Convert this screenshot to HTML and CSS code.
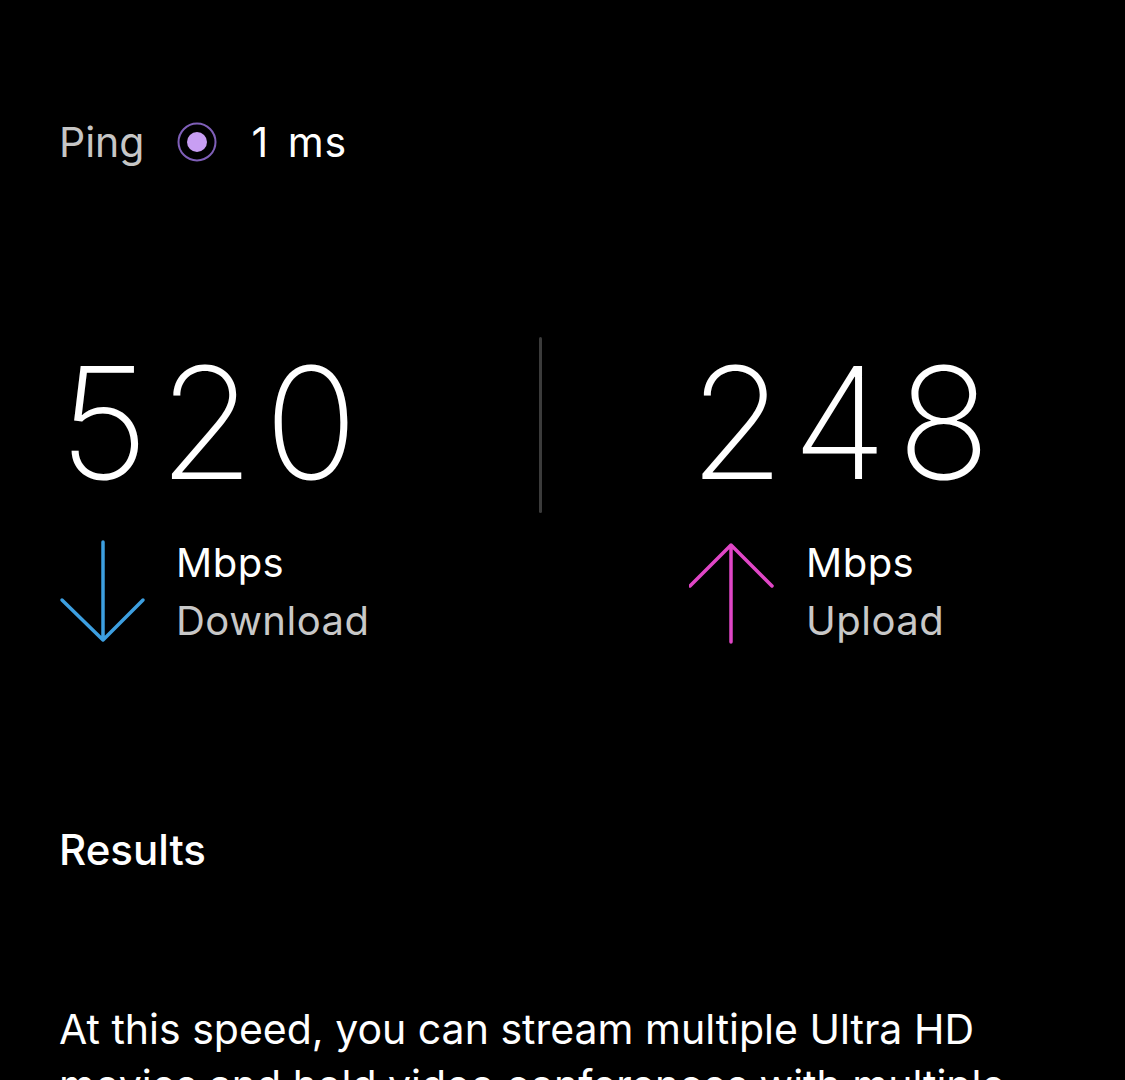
FILE: index.html
```html
<!DOCTYPE html>
<html lang="en">
<head>
    <meta charset="UTF-8">
    <meta name="viewport" content="width=device-width, initial-scale=1.0">
    <title>Speed Test Results</title>
    <link rel="stylesheet" href="styles.css">
</head>
<body>
    <div class="screen">
        <div class="ping">
            <span class="ping-label">Ping</span>
            <svg class="ping-dot" width="42" height="42" viewBox="0 0 42 42">
                <circle cx="21" cy="21" r="18.5" fill="none" stroke="#7f5fb8" stroke-width="2"/>
                <circle cx="21" cy="21" r="10" fill="#c89ef3"/>
            </svg>
            <span class="ping-value">1 ms</span>
        </div>

        <div class="speeds">
            <div class="speed">
                <div class="speed-value">520</div>
                <div class="speed-meta">
                    <svg class="arrow" width="90" height="104" viewBox="0 0 90 104">
                        <path d="M44 2 V100 M3 60 L44 100 L84 60" fill="none" stroke="#3d9fe0" stroke-width="3.5" stroke-linecap="round" stroke-linejoin="round"/>
                    </svg>
                    <div class="labels">
                        <span class="unit">Mbps</span>
                        <span class="kind">Download</span>
                    </div>
                </div>
            </div>

            <div class="divider"></div>

            <div class="speed speed-up">
                <div class="speed-value">248</div>
                <div class="speed-meta">
                    <svg class="arrow" width="90" height="104" viewBox="0 0 90 104">
                        <path d="M42 5 V102 M1 46 L42 5 L83 46" fill="none" stroke="#e046c6" stroke-width="3.5" stroke-linecap="round" stroke-linejoin="round"/>
                    </svg>
                    <div class="labels">
                        <span class="unit">Mbps</span>
                        <span class="kind">Upload</span>
                    </div>
                </div>
            </div>
        </div>

        <h2 class="results-title">Results</h2>

        <p class="results-text">At this speed, you can stream multiple Ultra HD movies and hold video conferences with multiple devices at the same time.</p>
    </div>
</body>
</html>
```

FILE: styles.css
```css
* {
    box-sizing: border-box;
    margin: 0;
    padding: 0;
}

html, body {
    background: #000;
}

body {
    font-family: Inter, "Noto Sans", sans-serif;
    color: #fff;
    overflow: hidden;
    height: 1080px;
}

.screen {
    padding: 118px 0 0 59px;
}

.ping {
    display: flex;
    align-items: center;
    height: 48px;
    font-size: 41px;
}

.ping-label {
    color: #c6c6c6;
}

.ping-dot {
    margin-left: 32px;
}

.ping-value {
    margin-left: 33px;
    letter-spacing: 1px;
    word-spacing: 6px;
}

.speeds {
    display: grid;
    grid-template-columns: 480px 3px 1fr;
    margin-top: 171px;
}

.divider {
    background: #3b3b3b;
    height: 176px;
    border-radius: 2px;
}

.speed-up {
    padding-left: 147px;
}

.speed-value {
    font-size: 155px;
    font-weight: 200;
    line-height: 1;
    margin-top: 8px;
    letter-spacing: 10px;
}

.speed-meta {
    display: flex;
    margin-top: 40px;
}

.arrow {
    flex: none;
}

.labels {
    display: flex;
    flex-direction: column;
    margin-left: 27px;
    font-size: 40px;
    letter-spacing: 0.5px;
    line-height: 58px;
    margin-top: -6px;
}

.unit {
    color: #fff;
}

.kind {
    color: #c8c8c8;
}

.results-title {
    font-size: 42px;
    font-weight: 500;
    margin-top: 175px;
    line-height: 50px;
}

.results-text {
    font-size: 41px;
    line-height: 56px;
    margin-top: 126px;
    width: 960px;
}
```
